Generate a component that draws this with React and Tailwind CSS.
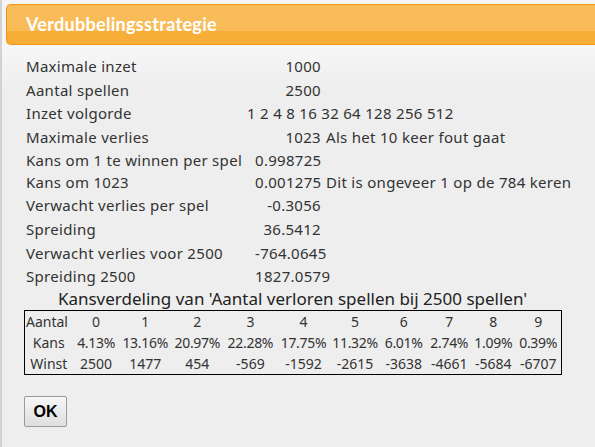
export default function App() {
  const rows = [
    ["Maximale inzet", "1000", "", "h-[23px]"],
    ["Aantal spellen", "2500", "", "h-[24px]"],
    ["Inzet volgorde", null, "1 2 4 8 16 32 64 128 256 512", "h-[23px]"],
    ["Maximale verlies", "1023", "Als het 10 keer fout gaat", "h-[24px]"],
    ["Kans om 1 te winnen per spel", "0.998725", "", "h-[22px]"],
    ["Kans om 1023", "0.001275", "Dit is ongeveer 1 op de 784 keren", "h-[23px]"],
    ["Verwacht verlies per spel", "-0.3056", "", "h-[23px]"],
    ["Spreiding", "36.5412", "", "h-[25px]"],
    ["Verwacht verlies voor 2500", "-764.0645", "", "h-[23px]"],
    ["Spreiding 2500", "1827.0579", "", "h-[23px]"],
  ];
  const aantal = ["0", "1", "2", "3", "4", "5", "6", "7", "8", "9"];
  const kans = ["4.13%", "13.16%", "20.97%", "22.28%", "17.75%", "11.32%", "6.01%", "2.74%", "1.09%", "0.39%"];
  const winst = ["2500", "1477", "454", "-569", "-1592", "-2615", "-3638", "-4661", "-5684", "-6707"];
  const widths = [48, 47, 51, 53, 53, 53, 50, 47, 44, 44, 46];
  return (
    <div className="w-[595px] h-[447px] overflow-hidden bg-[#eeeeee] border-l-2 border-[#d2d2d2] font-['Noto_Sans',sans-serif] text-[#333333]">
      <div className="pt-[4px] pl-[4px] bg-[#f4f4f4]">
        <div className="h-[41px] rounded-l-[5px] border border-r-0 border-[#f0960e] bg-[linear-gradient(#f8bc5a_0%,#f8bb57_66%,#f6ae38_66%,#f6ae38_100%)] flex items-center pl-[19px] text-white font-bold text-[18px] tracking-[0.3px] font-['Lato',sans-serif]">
          Verdubbelingsstrategie
        </div>
      </div>
      <div className="bg-[linear-gradient(#f7f7f7,#eeeeee_45px)] pt-[10px] pl-[24px] text-[15px]">
        {rows.map((r, i) => (
          <div key={i} className={`grid grid-cols-[229px_66px_1fr] items-center ${r[3]} whitespace-nowrap tracking-[0.3px]`}>
            <div>{r[0]}</div>
            {r[1] === null ? (
              <div className="col-span-2 -ml-[8px]">{r[2]}</div>
            ) : (
              <>
                <div className="text-right">{r[1]}</div>
                <div className="pl-[5px]">{r[2]}</div>
              </>
            )}
          </div>
        ))}
        <div className="w-[537px] -ml-[2px] text-center text-[17px] text-[#222222] h-[22px] leading-[22px] whitespace-nowrap">
          Kansverdeling van 'Aantal verloren spellen bij 2500 spellen'
        </div>
        <table className="-ml-[2px] border border-black border-collapse table-fixed w-[538px] text-[14px] text-[#333333]">
          <colgroup>
            {widths.map((w, i) => (
              <col key={i} style={{ width: w }} />
            ))}
          </colgroup>
          <tbody>
            <tr className="h-[21px]">
              <td className="text-left pl-[1px]">Aantal</td>
              {aantal.map((v) => (
                <td key={v} className="text-center">{v}</td>
              ))}
            </tr>
            <tr className="h-[21px]">
              <td className="text-center">Kans</td>
              {kans.map((v) => (
                <td key={v} className="text-center whitespace-nowrap tracking-[-0.3px]">{v}</td>
              ))}
            </tr>
            <tr className="h-[21px]">
              <td className="text-center">Winst</td>
              {winst.map((v) => (
                <td key={v} className="text-center">{v}</td>
              ))}
            </tr>
          </tbody>
        </table>
        <button className="mt-[21px] -ml-[2px] w-[43px] h-[31px] border border-[#9a9a9a] rounded-[2px] bg-[linear-gradient(#f7f7f7,#dedede)] text-black font-bold text-[16px] font-['Liberation_Sans',sans-serif]">
          OK
        </button>
      </div>
    </div>
  );
}
